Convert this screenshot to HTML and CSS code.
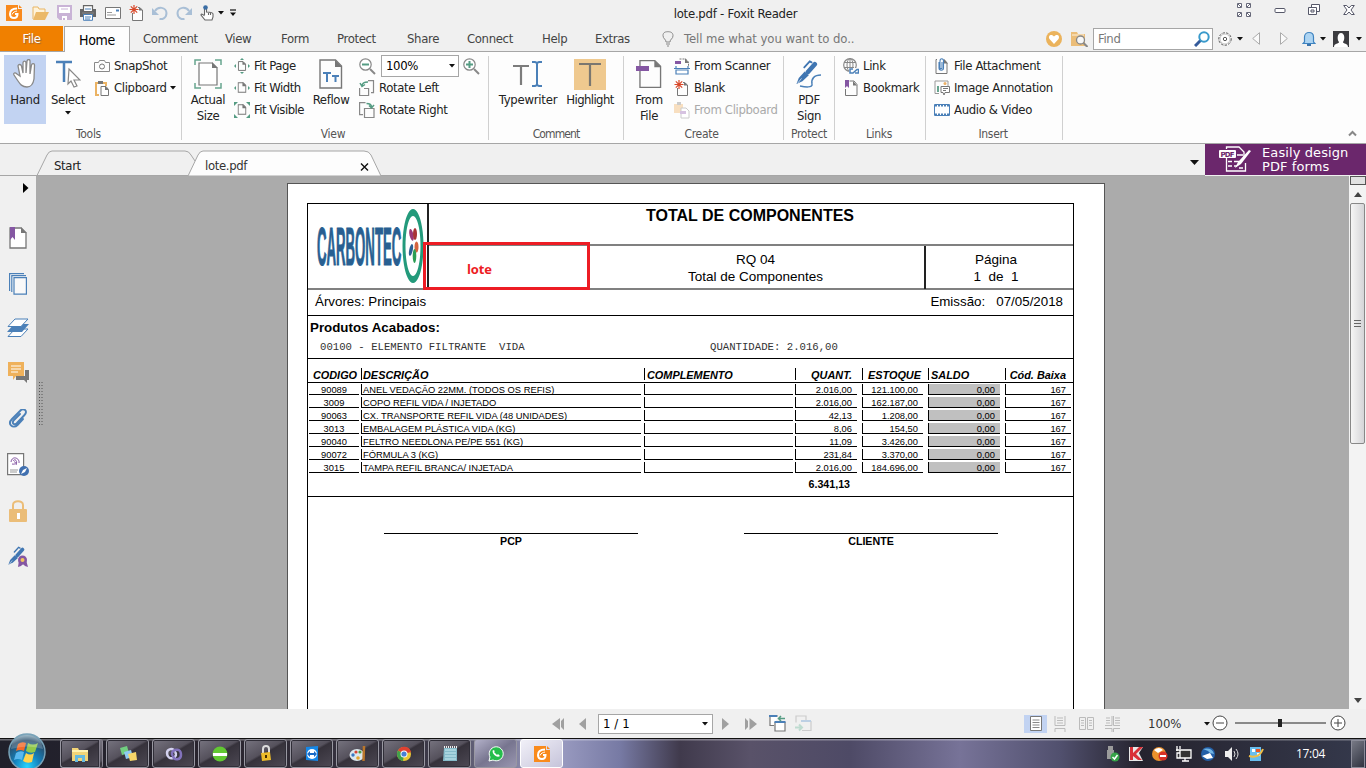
FILE: index.html
```html
<!DOCTYPE html>
<html lang="pt">
<head>
<meta charset="utf-8">
<title>lote.pdf - Foxit Reader</title>
<link rel="stylesheet" href="styles.css">
</head>
<body>
<svg class="defs" width="0" height="0">
  <defs>
    <symbol id="fox" viewBox="0 0 16 16"><path d="M0 0H12V4H16V16H0z" fill="#f98a1c"/><path d="M13 0v3h3z" fill="#f98a1c"/><path d="M11 3.500C6 3.500 4 6 4 9s2 4 4 4 3.500-1.500 3.500-4H9" fill="none" stroke="#fff" stroke-width="2"/><path d="M6 9.500C7 7 9 6.500 11 6" fill="none" stroke="#fff"/></symbol>
    <symbol id="newpage" viewBox="0 0 16 16"><path d="M3.500 8v7.500h10V5l-3-2.500H9" fill="#fdfdfd" stroke="#777"/><path d="M10 2v3.500h4z" fill="#777"/><path d="M5 0v9M.5 4.500h9M1.800 1.300l6.400 6.400M8.200 1.300L1.800 7.700" stroke="#d8482a" stroke-width="1.200"/></symbol>
    <symbol id="page" viewBox="0 0 24 30"><path d="M1 1h15.500l6 6v22H1z" fill="#fdfdfd" stroke="#777" stroke-width="1.400"/><path d="M16 1v7h7z" fill="#777"/></symbol>
    <symbol id="minipage" viewBox="0 0 10 12"><path d="M.7.7h5.600l3 3v7.600H.7z" fill="#fdfdfd" stroke="#777" stroke-width="1.200"/><path d="M5.500 0v4.500H10z" fill="#777"/></symbol>
    <symbol id="down" viewBox="0 0 6 4"><path d="M0 0h6L3 3.500z" fill="#111"/></symbol>
    <symbol id="clip" viewBox="0 0 20 20"><path d="M12 5L6 11c-3 3 .5 6 3 3l7.500-8c4-4-1-8-4.500-4L4 10c-5 5 1 10.500 5.500 6L15 10" fill="none" stroke="#4b80b8" stroke-width="1.900" stroke-linecap="round"/></symbol>
    <symbol id="pen" viewBox="0 0 24 26"><path d="M20.500 4.500L13 13" stroke="#4076b2" stroke-width="5" stroke-linecap="round"/><path d="M9.500 12.500l4.500 4L7 23l-6.500 3L3 19.500z" fill="#4076b2"/><path d="M9 8l6-6.500 2 1" fill="none" stroke="#4076b2" stroke-width="2" stroke-linecap="round"/><path d="M2 25l4-5" stroke="#fff" stroke-width=".7"/></symbol>
  </defs>
</svg>

<header class="titlebar">
  <div class="qat">
    <svg width="16" height="16"><use href="#fox"/></svg>
    <svg class="open" width="17" height="16" viewBox="0 0 17 16"><path d="M1 14V2h5l1 2h6v3" fill="#fff3d9" stroke="#e9b665"/><path d="M4 7h13l-4 8H1z" fill="#ebb969"/></svg>
    <svg width="15" height="16" viewBox="0 0 15 16"><path d="M1 1h13v13H3l-2-2z" fill="#fff" stroke="#c9b3d6" stroke-width="2"/><path d="M1 8h13v7H4l-3-3z" fill="#c9b3d6"/><path d="M4 4h7" stroke="#c9b3d6"/><path d="M5 11h5v4H8v-2H6v2H5z" fill="#fff"/></svg>
    <svg width="17" height="16" viewBox="0 0 17 16"><path d="M3.500 6V.7h9V6" fill="#fff" stroke="#666" stroke-width="1.200"/><path d="M0 4h3v2h10V4h3v8H0z" fill="#666"/><path d="M2 7h12v2H2z" fill="#777"/><path d="M3.500 9.500h9v5.800h-9z" fill="#fff" stroke="#4b80b8"/><path d="M5 12h6M5 14h5M5 4h6" stroke="#4b80b8"/></svg>
    <svg width="16" height="12" viewBox="0 0 16 12"><path d="M.5.5h15v11H.5z" fill="#fff" stroke="#777"/><path d="M11 2.500h3v2h-3z" fill="#4b80b8"/><path d="M2 5.500h5M2 8h9" stroke="#999"/></svg>
    <svg width="16" height="16"><use href="#newpage"/></svg>
    <svg class="undo" width="16" height="15" viewBox="0 0 16 15"><path d="M3 5C6 0 14 1 14.500 7c0 5-4 6.500-7 6" fill="none" stroke="#a9bfd6" stroke-width="2"/><path d="M0 2v7h7z" fill="#a9bfd6"/></svg>
    <svg width="16" height="15" viewBox="0 0 16 15"><path d="M13 5C10 0 2 1 1.500 7c0 5 4 6.500 7 6" fill="none" stroke="#a9bfd6" stroke-width="2"/><path d="M16 2v7H9z" fill="#a9bfd6"/></svg>
    <svg width="14" height="16" viewBox="0 0 14 16"><path d="M4.500 10V3c0-1.500 2-1.500 2 0v4c4 0 6.500.5 6.500 2v3l-1 3H5L1 10c0-1.500 2-1 3.500 1M8.500 8v2M10.500 8v2" fill="#fff" stroke="#666" stroke-width="1.100"/><circle cx="5.500" cy="2.500" r="2.300" fill="#3a6da5"/></svg>
    <svg class="tiny" width="6" height="4"><use href="#down"/></svg>
    <svg class="more" width="6" height="8" viewBox="0 0 6 8"><path d="M0 1h6" stroke="#111" stroke-width="1.200"/><path d="M0 3.500h6L3 7z" fill="#111"/></svg>
  </div>
  <div class="title">lote.pdf - Foxit Reader</div>
  <div class="winbtns">
    <svg width="14" height="14" viewBox="0 0 14 14"><path d="M.5.500h4v4h-4zM9.500.500h4v4h-4zM.5 9.500h4v4h-4zM9.500 9.500h4v4h-4z" fill="#fff" stroke="#666879"/><path d="M1 1l3 3M13 1l-3 3M1 13l3-3M13 13l-3-3" stroke="#666879"/></svg>
    <svg width="12" height="14" viewBox="0 0 12 14"><rect x="1" y="5.500" width="10" height="4" rx="1" fill="#fff" stroke="#555768"/></svg>
    <svg width="12" height="14" viewBox="0 0 12 14"><path d="M3.500 4V1.500h8v7H9" fill="#fff" stroke="#555768"/><path d="M.5 4.500h8v7h-8zM3 7h3v2H3z" fill="#fff" stroke="#555768"/></svg>
    <svg width="12" height="14" viewBox="0 0 12 14"><path d="M.7 2.500h3L6 5l2.300-2.500h3L8 7l3.300 4.500h-3L6 9l-2.300 2.500h-3L4 7z" fill="#fff" stroke="#555768"/></svg>
  </div>
</header>

<nav class="tabs">
  <div class="file">File</div>
  <div class="tab home">Home</div>
  <div class="tab t1">Comment</div><div class="tab t2">View</div><div class="tab t3">Form</div><div class="tab t4">Protect</div><div class="tab t5">Share</div><div class="tab t6">Connect</div><div class="tab t7">Help</div><div class="tab t8">Extras</div>
  <svg class="bulb" width="12" height="16" viewBox="0 0 12 16"><path d="M4 11C4 8 1 8 1 4.500 1 1 4 .7 6 .7s5 .5 5 4C11 8 8 8 8 11zM4 13h4M5 15h2" fill="none" stroke="#888"/></svg>
  <div class="tell">Tell me what you want to do..</div>
  <div class="tools">
    <svg width="16" height="16" viewBox="0 0 16 16"><circle cx="8" cy="8" r="8" fill="#ebb35c"/><path d="M8 13L3.500 8C1.500 4 6 2.500 8 5.500 10 2.500 14.500 4 12.500 8z" fill="#fff"/></svg>
    <svg class="search" width="17" height="16" viewBox="0 0 17 16"><path d="M0 1h6l1 2h7v12H0z" fill="#ebbd78"/><path d="M1 4h12" stroke="#fff3df"/><circle cx="9.500" cy="9" r="4" fill="#f7f7f7" stroke="#888" stroke-width="1.300"/><path d="M12.500 12l4 4" stroke="#888" stroke-width="2"/></svg>
    <div class="find"><span>Find</span><svg width="16" height="16" viewBox="0 0 16 16"><path d="M1 15l6-6" stroke="#345b9b" stroke-width="3"/><circle cx="10" cy="6" r="4.700" fill="#fff" stroke="#3a9acb" stroke-width="2"/></svg></div>
    <svg class="gear" width="14" height="14" viewBox="0 0 14 14"><circle cx="7" cy="7" r="6.200" fill="#fff" stroke="#555" stroke-dasharray="2.500 1.200"/><circle cx="7" cy="7" r="5" fill="#fff" stroke="#888" stroke-width=".5"/><circle cx="7" cy="7" r="1.700" fill="none" stroke="#555"/></svg>
    <svg class="gd" width="6" height="4"><use href="#down"/></svg>
    <svg class="prev" width="8" height="13" viewBox="0 0 8 13"><path d="M7.500.7v11.600L.7 6.500z" fill="#fafafa" stroke="#aaa"/></svg>
    <svg class="next" width="8" height="13" viewBox="0 0 8 13"><path d="M.5.700v11.600l6.800-5.800z" fill="#fafafa" stroke="#aaa"/></svg>
    <svg class="bell" width="14" height="15" viewBox="0 0 14 15"><path d="M2.500 11V6C2.500 0 11.500 0 11.500 6v5l1.500 1.500H1z" fill="#add4f2" stroke="#3e83c0" stroke-width="1.200"/><path d="M5 14h4" stroke="#2666a4" stroke-width="1.800"/></svg>
    <svg class="bd" width="6" height="4"><use href="#down"/></svg>
    <svg class="user" width="16" height="16" viewBox="0 0 16 16"><path d="M0 0h16v16H0z" fill="#3b3b3f"/><path d="M1 16c0-4 5-3 5-5-2-2-2-9 2-9s4 7 2 9c0 2 5 1 5 5z" fill="#fff"/></svg>
    <svg class="ud" width="6" height="4"><use href="#down"/></svg>
  </div>
</nav>

<section class="ribbon">
  <div class="group g-tools">
    <div class="body">
      <div class="big hand"><svg width="26" height="30" viewBox="0 0 26 30"><path d="M8 17L6 7c0-2 3-2 3.500 0L11 14V4c0-2.500 3-2.500 3 0v10l1-12c.5-2 3-2 3 0v13l1.500-9c.5-2 3-1.500 3 0L22 20c-1 6-4 8-7 8-5 0-7-3-9-6l-4-6c-1-2 1-3 3-1z" fill="#fff" stroke="#888" stroke-width="1.300"/></svg><span>Hand</span></div>
      <div class="big select"><svg width="26" height="30" viewBox="0 0 26 30"><path d="M1 3h16M9 3v20" stroke="#4b80b8" stroke-width="2.500"/><path d="M14 10l11 11h-6l3 6-3 1-3-6-3 3z" fill="#fff" stroke="#888" stroke-width="1.200"/></svg><span>Select</span><svg class="drop" width="6" height="4"><use href="#down"/></svg></div>
      <div class="col c-tools">
        <div class="item"><svg width="16" height="12" viewBox="0 0 16 12"><path d="M.5 2.500h4l1-2h5l1 2h4v9H.5z" fill="#fdfdfd" stroke="#888"/><circle cx="8" cy="6.500" r="2.500" fill="none" stroke="#777"/></svg><span>SnapShot</span></div>
        <div class="item"><svg width="16" height="16" viewBox="0 0 16 16"><path d="M5 15H2V3h10v3" fill="none" stroke="#ebb364" stroke-width="2"/><path d="M4 1h5v3H4z" fill="#777"/><path d="M7 6.500h5l2.500 3v6H7z" fill="#fff" stroke="#777"/><path d="M11 6v4h4z" fill="#777"/></svg><span>Clipboard</span><svg class="arr" width="6" height="4"><use href="#down"/></svg></div>
      </div>
    </div>
    <div class="label">Tools</div>
  </div>
  <div class="group g-view">
    <div class="body">
      <div class="big actual"><svg width="28" height="30" viewBox="0 0 28 30"><path d="M1 6V1h6M21 1h6v5M1 24v5h6M21 29h6v-5" fill="none" stroke="#67a58f" stroke-width="1.500"/><path d="M5 4h13l5 5v17H5z" fill="#fff" stroke="#777" stroke-width="1.200"/><path d="M18 3v6h6z" fill="#777"/></svg><span>Actual<br>Size</span></div>
      <div class="col c-fit">
        <div class="item"><svg width="16" height="16" viewBox="0 0 16 16"><use href="#minipage" x="3.500" y="3" width="9" height="10"/><path d="M6 2h4L8 0zM6 14h4l-2 2zM2 6v4L0 8zM14 6v4l2-2z" fill="#559c83"/></svg><span>Fit Page</span></div>
        <div class="item"><svg width="16" height="16" viewBox="0 0 16 16"><use href="#minipage" x="3.500" y="2" width="9" height="11"/><path d="M2 6v4L0 8zM14 6v4l2-2z" fill="#559c83"/></svg><span>Fit Width</span></div>
        <div class="item"><svg width="16" height="16" viewBox="0 0 16 16"><use href="#minipage" x="3.500" y="2" width="9" height="11"/><path d="M0 0h4L0 4zM12 0h4v4zM0 12v4h4zM12 16h4v-4z" fill="#559c83"/></svg><span>Fit Visible</span></div>
      </div>
      <div class="big reflow"><svg width="24" height="30" viewBox="0 0 24 30"><use href="#page" width="24" height="30"/><path d="M4 14h8M8 14v9M13 17h7M16.500 17v6" stroke="#4b80b8" stroke-width="2"/></svg><span>Reflow</span></div>
      <div class="col c-rotate">
        <div class="item zoomrow"><svg width="17" height="17" viewBox="0 0 17 17"><circle cx="6.500" cy="6.500" r="5.700" fill="#fff" stroke="#888" stroke-width="1.200"/><path d="M3 6.500h7" stroke="#559c83" stroke-width="2"/><path d="M11 11l5 5" stroke="#888" stroke-width="2"/></svg><div class="combo"><span>100%</span><svg width="6" height="4"><use href="#down"/></svg></div><svg width="17" height="17" viewBox="0 0 17 17"><circle cx="6.500" cy="6.500" r="5.700" fill="#fff" stroke="#888" stroke-width="1.200"/><path d="M3 6.500h7M6.500 3v7" stroke="#559c83" stroke-width="2"/><path d="M11 11l5 5" stroke="#888" stroke-width="2"/></svg></div>
        <div class="item"><svg width="16" height="16" viewBox="0 0 16 16"><path d="M9 .600h5.500v12H12M.6 8v7.500h9v-7H5" fill="none" stroke="#888" stroke-width="1.200"/><path d="M3 6c0-3 2-4 6-4M1 3l2 3.500 3-2" fill="none" stroke="#559c83" stroke-width="1.500"/></svg><span>Rotate Left</span></div>
        <div class="item"><svg width="16" height="16" viewBox="0 0 16 16"><path d="M6.500.600H.6v12H4M5.500 6.500h9.500v9H5.500z" fill="none" stroke="#888" stroke-width="1.200"/><path d="M12.500 5c0-3-2-3.500-5-3.500M10 3.500l2.500 2.500 2.500-3" fill="none" stroke="#559c83" stroke-width="1.500"/></svg><span>Rotate Right</span></div>
      </div>
    </div>
    <div class="label">View</div>
  </div>
  <div class="group g-comment">
    <div class="body">
      <div class="big typew"><svg width="30" height="32" viewBox="0 0 30 32"><path d="M0 8h16M8 8v19" stroke="#7c7c7c" stroke-width="2.200"/><path d="M19 4h3l2 1 2-1h3M19 28h3l2-1 2 1h3M24 5v22" fill="none" stroke="#4b80b8" stroke-width="2"/></svg><span>Typewriter</span></div>
      <div class="big hl"><svg width="32" height="31" viewBox="0 0 32 31"><path d="M0 0h32v31H0z" fill="#efc98f"/><path d="M5 5h22M16 5v22" stroke="#7b7770" stroke-width="2.200"/></svg><span>Highlight</span></div>
    </div>
    <div class="label tight">Comment</div>
  </div>
  <div class="group g-create">
    <div class="body">
      <div class="big fromfile"><svg width="26" height="30" viewBox="0 0 26 30"><use href="#page" x="3" width="23" height="30"/><path d="M0 7h13v5H0z" fill="#8557a3"/></svg><span>From<br>File</span></div>
      <div class="col c-create">
        <div class="item"><svg width="16" height="17" viewBox="0 0 16 17"><path d="M5.500 1h6l3 3v4" fill="none" stroke="#777" stroke-dasharray="2 1"/><path d="M11 0v5h4z" fill="#777"/><path d="M1 3h6v3H1z" fill="#8557a3"/><path d="M2 8v2M14 8v2M2 16v-4h12v4z" fill="#fff" stroke="#4b80b8" stroke-width="1.200"/><path d="M0 10.500h16" stroke="#4b80b8"/></svg><span>From Scanner</span></div>
        <div class="item"><svg width="16" height="16"><use href="#newpage"/></svg><span>Blank</span></div>
        <div class="item off"><svg width="16" height="17" viewBox="0 0 16 17"><path d="M0 2h9v9H0z" fill="#f8dfc0"/><path d="M3 0h4v3H3z" fill="#ccc"/><path d="M7 6h5l3 3v7H7z" fill="#fff" stroke="#ccc"/><path d="M6 9h6v3H6z" fill="#d6c2e1"/></svg><span>From Clipboard</span></div>
      </div>
    </div>
    <div class="label">Create</div>
  </div>
  <div class="group g-protect">
    <div class="body"><div class="big sign"><svg width="26" height="30" viewBox="0 0 26 30"><use href="#pen" x="0" y="0" width="22" height="26"/><path d="M4 27c5 1 13 2 12-2-1-5 2-9 9-9" fill="none" stroke="#4b80b8" stroke-width="1.500"/></svg><span>PDF<br>Sign</span></div></div>
    <div class="label">Protect</div>
  </div>
  <div class="group g-links">
    <div class="body"><div class="col c-links">
      <div class="item"><svg width="16" height="16" viewBox="0 0 16 16"><circle cx="7" cy="7" r="6.300" fill="none" stroke="#888" stroke-width="1.200"/><ellipse cx="7" cy="7" rx="3" ry="6.300" fill="none" stroke="#888"/><path d="M1 4.500h12M1 9.500h10M7 1v12" stroke="#888"/><path d="M6 10h10v6H6z" fill="#fdfdfd"/><path d="M10 11H7v4h3l4-3.500h1.500V15H12" fill="none" stroke="#4b80b8" stroke-width="1.500"/></svg><span>Link</span></div>
      <div class="item"><svg width="16" height="16" viewBox="0 0 16 16"><path d="M6.500 1H11l3 3.500v11H2.500V9" fill="none" stroke="#777"/><path d="M10 1v4.500h4z" fill="#777"/><path d="M2 0h4v8L4 6 2 8z" fill="#8557a3"/></svg><span>Bookmark</span></div>
    </div></div>
    <div class="label">Links</div>
  </div>
  <div class="group g-insert">
    <div class="body"><div class="col c-insert">
      <div class="item"><svg width="16" height="16" viewBox="0 0 16 16"><path d="M3 1.500H2v14h11V5l-3-3.500" fill="none" stroke="#777"/><path d="M10 1v4.500h4z" fill="#777"/><path d="M5 4v6c0 3 4.500 3 4.500 0V3c0-3-3.500-3-3.500 0v7c0 1 2 1 2 0V4" fill="none" stroke="#4b80b8" stroke-width="1.100"/></svg><span>File Attachment</span></div>
      <div class="item"><svg width="16" height="16" viewBox="0 0 16 16"><path d="M5 13.500H1V1h13v5" fill="none" stroke="#999"/><circle cx="11" cy="3.500" r="1.500" fill="#ebaf65"/><path d="M3 6h2v6H3z" fill="#67a58f"/><path d="M7 6.500h8.500v6H11L10 15l-1-2.500H7z" fill="#fff" stroke="#777"/><path d="M9 8.500h5M9 10.500h3" stroke="#777"/></svg><span>Image Annotation</span></div>
      <div class="item"><svg width="16" height="12" viewBox="0 0 16 12"><path d="M.5.500h15v11H.5z" fill="#fff" stroke="#4b80b8"/><path d="M1 1.500h14M1 10.500h14" stroke="#4b80b8" stroke-width="2" stroke-dasharray="2 1"/></svg><span>Audio &amp; Video</span></div>
    </div></div>
    <div class="label">Insert</div>
  </div>
  <svg class="collapse" width="9" height="7" viewBox="0 0 9 7"><path d="M1 5.500L4.500 2 8 5.500" fill="none" stroke="#888" stroke-width="2"/></svg>
</section>

<div class="doctabs">
  <svg class="tabshape" width="1205" height="32" viewBox="0 0 1205 32"><path d="M37 31.500L47 11q2-4 5-4H185q4 0 6 4l4 6" fill="none" stroke="#a6a6a6"/><path d="M188 32L198 11q2-4 5-4H364q5 0 7 4l10 21z" fill="#fdfdfd" stroke="#a6a6a6"/><path d="M0 31.500H188M381 31.500H1205" stroke="#a6a6a6"/></svg>
  <div class="names"><span class="start">Start</span><span class="doc">lote.pdf</span><svg class="close" width="9" height="8" viewBox="0 0 9 8"><path d="M1 .5l7 7M8 .5l-7 7" stroke="#111" stroke-width="1.400"/></svg><svg class="list" width="9" height="5" viewBox="0 0 9 5"><path d="M0 0h9L4.500 5z" fill="#111"/></svg></div>
  <div class="promo"><svg width="32" height="27" viewBox="0 0 32 27"><path d="M7.500 3V1H20l5 5v6M7.500 12v13h19V17" fill="none" stroke="#fff" stroke-width="1.300"/><rect x="0" y="4" width="17" height="8" rx="1" fill="#fff"/><text x="1.500" y="11" class="pdf" textLength="14">PDF</text><path d="M18 9h6M9 15.500h4M15 15.500h5M9 20h4M15 20h3M20 22h4" stroke="#fff" stroke-width="1.600"/><path d="M30 4L19 16l-3 6 6-4L32 5z" fill="#fff"/></svg><div>Easily design<br>PDF forms</div></div>
</div>

<main>
  <aside>
    <svg class="s0" width="6" height="10" viewBox="0 0 6 10"><path d="M0 0l5.500 5L0 10z" fill="#000"/></svg>
    <svg width="18" height="22" viewBox="0 0 18 22"><path d="M1 1h11l5 5v15H1z" fill="#fff" stroke="#777" stroke-width="1.300"/><path d="M12 0v6h6z" fill="#777"/><path d="M1 0h5v13l-2.500-3L1 13z" fill="#8557a3"/></svg>
    <svg width="18" height="22" viewBox="0 0 18 22"><path d="M.6 18V.700H15M2.800 19V2.700H17M5 4.700h12.400v16.500H5z" fill="#f9f9f9" stroke="#4b80b8" stroke-width="1.200"/></svg>
    <svg width="22" height="20" viewBox="0 0 22 20"><path d="M1 18.500h13L21 11H8z" fill="#fff" stroke="#4b80b8"/><path d="M0 14h15l7-8H7z" fill="#4b80b8"/><path d="M1 8.500h13L21 1H8z" fill="#fff" stroke="#4b80b8"/></svg>
    <svg width="21" height="22" viewBox="0 0 21 22"><path d="M17 8h4v10h-2v3l-3-3H8v-4h9z" fill="#777"/><path d="M0 0h16v14H8l-3 4v-4H0z" fill="#efb15b"/><path d="M3 4h10M3 7h10M3 10h7" stroke="#fff"/></svg>
    <svg width="20" height="22" viewBox="0 0 20 20"><use href="#clip" width="20" height="20"/></svg>
    <svg class="cert" width="22" height="24" viewBox="0 0 22 24"><path d="M.6.600h16v21H.6z" fill="#fff" stroke="#777" stroke-width="1.200"/><path d="M4 9c1-7 9-4 8 1M6 8c2-3 5 0 3 4M5 11c5 1 4-3 2-2" fill="none" stroke="#8557a3"/><path d="M3 17h8M3 19h7" stroke="#999"/><circle cx="17" cy="18" r="5" fill="#4070b0"/><path d="M14 21l2-4 4-2-2 4z" fill="#fff"/></svg>
    <svg width="18" height="22" viewBox="0 0 18 22"><path d="M4 10V5c0-5 10-5 10 0v5" fill="none" stroke="#ebbd78" stroke-width="2"/><rect y="9" width="18" height="13" rx="1" fill="#ebbd78"/><path d="M8 13h3v6H8z" fill="#fff"/></svg>
    <svg width="22" height="22" viewBox="0 0 22 22"><use href="#pen" x="1" width="17" height="21"/><path d="M12 15l-1 7 3-1 2-2 2 2 3 1-2-7z" fill="#8557a3"/><circle cx="15.500" cy="15" r="4.500" fill="#8557a3"/><circle cx="15.500" cy="15" r="2" fill="#f4c65f"/></svg>
  </aside>
  <div class="viewer">
    <svg class="grip" width="4" height="45" viewBox="0 0 4 45"><path d="M.5 0v45M3 0v45" stroke="#555" stroke-dasharray="1 2"/></svg>
    <article class="sheet">
      <div class="report">
        <div class="head">
          <svg class="brand" width="119" height="85" viewBox="0 0 119 85"><text class="brandtext" transform="translate(9 61) scale(.245 1)" textLength="344" lengthAdjust="spacingAndGlyphs">CARBONTEC</text><path fill-rule="evenodd" d="M105 5a10.500 37 0 1 0 .01 0zM105 12a7.500 30 0 1 1-.01 0z" fill="#239a7b"/><ellipse cx="103.500" cy="31" rx="2" ry="6" fill="#9a3677" transform="rotate(-12 103 31)"/><ellipse cx="107" cy="30" rx="2" ry="6" fill="#a83235"/><ellipse cx="108.500" cy="43" rx="2" ry="5.500" fill="#d56440"/><ellipse cx="103" cy="46" rx="1.800" ry="6" fill="#2c6094" transform="rotate(12 103 46)"/><ellipse cx="106.500" cy="52" rx="1.800" ry="7" fill="#2a9d53"/></svg>
          <div class="headmain">
            <div class="htitle">TOTAL DE COMPONENTES</div>
            <div class="hrow"><div class="hempty"></div><div class="hrq">RQ 04<br>Total de Componentes</div><div class="hpag">Página<br>1&nbsp; de&nbsp; 1</div></div>
          </div>
          <div class="redbox">lote</div>
        </div>
        <div class="meta"><span class="trees">Árvores: Principais</span><span class="date">Emissão:&nbsp;&nbsp; 07/05/2018</span></div>
        <div class="prod"><b>Produtos Acabados:</b><div class="mono"><span>00100 - ELEMENTO FILTRANTE&nbsp; VIDA</span><span>QUANTIDADE: 2.016,00</span></div></div>
        <div class="table">
          <div class="tr th"><div>CODIGO</div><div>DESCRIÇÃO</div><div>COMPLEMENTO</div><div>QUANT.</div><div>ESTOQUE</div><div>SALDO</div><div>Cód. Baixa</div></div>
          <div class="tr"><div>90089</div><div>ANEL VEDAÇÃO 22MM. (TODOS OS REFIS)</div><div></div><div>2.016,00</div><div>121.100,00</div><div>0,00</div><div>167</div></div>
          <div class="tr"><div>3009</div><div>COPO REFIL VIDA / INJETADO</div><div></div><div>2.016,00</div><div>162.187,00</div><div>0,00</div><div>167</div></div>
          <div class="tr"><div>90063</div><div>CX. TRANSPORTE REFIL VIDA (48 UNIDADES)</div><div></div><div>42,13</div><div>1.208,00</div><div>0,00</div><div>167</div></div>
          <div class="tr"><div>3013</div><div>EMBALAGEM PLÁSTICA VIDA (KG)</div><div></div><div>8,06</div><div>154,50</div><div>0,00</div><div>167</div></div>
          <div class="tr"><div>90040</div><div>FELTRO NEEDLONA PE/PE 551 (KG)</div><div></div><div>11,09</div><div>3.426,00</div><div>0,00</div><div>167</div></div>
          <div class="tr"><div>90072</div><div>FÓRMULA 3 (KG)</div><div></div><div>231,84</div><div>3.370,00</div><div>0,00</div><div>167</div></div>
          <div class="tr"><div>3015</div><div>TAMPA REFIL BRANCA/ INJETADA</div><div></div><div>2.016,00</div><div>184.696,00</div><div>0,00</div><div>167</div></div>
          <div class="total">6.341,13</div>
        </div>
        <div class="signs"><div>PCP</div><div>CLIENTE</div></div>
      </div>
    </article>
  </div>
  <div class="scroll"><div class="split"></div><svg class="up" width="8" height="5" viewBox="0 0 8 5"><path d="M0 5h8L4 0z" fill="#444"/></svg><div class="thumb"><i></i></div><svg class="dn" width="8" height="5" viewBox="0 0 8 5"><path d="M0 0h8L4 5z" fill="#444"/></svg></div>
</main>

<footer class="status">
  <svg class="first" width="13" height="12" viewBox="0 0 13 12"><path d="M8 0v12L0 6zM12 0v12L9 9V3z" fill="#a0a0a0"/></svg>
  <svg class="pv" width="7" height="12" viewBox="0 0 7 12"><path d="M7 0v12L0 6z" fill="#a0a0a0"/></svg>
  <div class="pagebox"><span>1 / 1</span><svg width="6" height="4"><use href="#down"/></svg></div>
  <svg class="nx" width="7" height="12" viewBox="0 0 7 12"><path d="M0 0v12l7-6z" fill="#a0a0a0"/></svg>
  <svg class="last" width="12" height="12" viewBox="0 0 12 12"><path d="M0 0v12l3-3V3zM4.500 0v12L12 6z" fill="#a0a0a0"/></svg>
  <svg class="v1" width="17" height="17" viewBox="0 0 17 17"><path d="M5 10.500H1V1h8M6 7.500h10v8.500H6z" fill="#fff" stroke="#777" stroke-width="1.200"/><path d="M0 1h8M5.500 7h11" stroke="#4b80b8" stroke-width="2"/><path d="M16 3.500H9.500m2.500-2.500l-2.500 2.500 2.500 2.500" fill="none" stroke="#559c83" stroke-width="1.500"/></svg>
  <svg class="v2" width="17" height="17" viewBox="0 0 17 17"><path d="M1 7.500V1h10v4M7 6.500h9v9H7" fill="none" stroke="#ccc" stroke-width="1.200"/><path d="M6 6h10" stroke="#bdd0e4" stroke-width="2"/><path d="M0 12.500h7m-3-3l3 3-3 3" fill="none" stroke="#bedbd0" stroke-width="2"/></svg>
  <div class="mode"><svg width="12" height="15" viewBox="0 0 12 15"><path d="M.5.500h11v14H.5z" fill="#fff" stroke="#777"/><path d="M2.500 4h7M2.500 6.500h7M2.500 9h7M2.500 11.500h7" stroke="#888"/></svg></div>
  <svg class="m2" width="12" height="16" viewBox="0 0 12 16"><path d="M1 0v9.500h10V0M1 16v-3.500h10V16M3 2h6M3 4.500h6M3 7h6" fill="none" stroke="#bbb"/></svg>
  <svg class="m3" width="15" height="14" viewBox="0 0 15 14"><path d="M.5.500h6v12h-6zM8.500.500h6v12h-6zM2 3.500h3M2 6h3M2 8.500h3M10 3.500h3M10 6h3M10 8.500h3" fill="none" stroke="#bbb"/></svg>
  <svg class="m4" width="16" height="16" viewBox="0 0 16 16"><path d="M0 9.500h7V0M15 9.500H8.500V0M0 12.500h7V16M15 12.500H8.500V16M1 2h4M1 4.500h4M1 7h4M10 2h5M10 4.500h5M10 7h5" fill="none" stroke="#bbb"/></svg>
  <span class="pct">100%</span><svg class="pd" width="6" height="4"><use href="#down"/></svg>
  <svg class="slider" width="134" height="16" viewBox="0 0 134 16"><circle cx="8" cy="8" r="7" fill="#fff" stroke="#444"/><path d="M4 8h8" stroke="#444"/><path d="M23 8h91" stroke="#222" stroke-width="1.200"/><path d="M66 4h4v8h-4z" fill="#222"/><circle cx="126" cy="8" r="7" fill="#fff" stroke="#444"/><path d="M122 8h8M126 4v8" stroke="#444"/></svg>
</footer>

<div class="taskbar">
  <svg class="orb" width="38" height="38" viewBox="0 0 38 38"><defs><radialGradient id="og" cx=".5" cy=".9" r=".9"><stop offset="0" stop-color="#25d5ff"/><stop offset=".4" stop-color="#1480bb"/><stop offset=".8" stop-color="#294c69"/><stop offset="1" stop-color="#9abccc"/></radialGradient></defs><circle cx="19" cy="19" r="18" fill="url(#og)" stroke="#78a2b8" stroke-width="1.500"/><path d="M10 11q4-3 8-1l-2 8q-4-2-8 0z" fill="#f16b2a"/><path d="M20 10q5 3 10 0l-3 9q-5 2-9-1z" fill="#91c84b"/><path d="M8 20q4-3 8-1l-2 8q-4-2-8 0z" fill="#59b8ef"/><path d="M18 20q4 3 8 0l-2 9q-5 2-9-1z" fill="#ffd34d"/><path d="M3 16Q4 3 19 2q14 1 16 14-15-5-32 0" fill="#fff" opacity=".2"/></svg>
  <div class="apps">
    <div class="app stack"><svg width="20" height="20" viewBox="0 0 20 20"><path d="M2 4h6l1 2h9v11H2z" fill="#f2d477"/><path d="M2 7h16" stroke="#fff2b0" stroke-width="2"/><path d="M5 18v-7h10v7h-3v-4H8v4z" fill="#65b9df"/></svg></div>
    <div class="app"><svg width="20" height="20" viewBox="0 0 20 20"><path d="M2 4l7-2 2 7-7 2z" fill="#71ce80"/><path d="M6 8l7-2 2 7-7 2z" fill="#8ec9f1"/><path d="M10 10l8-2 1 8-7 1z" fill="#f5d569"/></svg></div>
    <div class="app"><svg width="20" height="20" viewBox="0 0 20 20"><path d="M11 8C9 3 3 5 3 9s3 6 6 5 4-4 2-6" fill="none" stroke="#d4d2ef" stroke-width="2.500"/><path d="M9 12c1 5 8 4 8-1s-3-6-6-5-4 4-2 6" fill="none" stroke="#8272bb" stroke-width="2.500"/></svg></div>
    <div class="app"><svg width="20" height="20" viewBox="0 0 20 20"><circle cx="10" cy="10" r="7.500" fill="#62c832"/><path d="M3 9h14v3H3z" fill="#fff"/></svg></div>
    <div class="app"><svg width="20" height="20" viewBox="0 0 20 20"><path d="M7 9V5c0-4 6-4 6 0v4" fill="none" stroke="#ddd" stroke-width="2"/><path d="M5 9l9-1 1 8-9 1z" fill="#eebd2a"/><path d="M10 11v3" stroke="#493000" stroke-width="2"/></svg></div>
    <div class="app"><svg width="20" height="20" viewBox="0 0 20 20"><path d="M4 3l12-1v15L4 16z" fill="#1687e7"/><circle cx="10" cy="10" r="5" fill="#fff"/><path d="M5 10l3-3v2h4V7l3 3-3 3v-2H8v2z" fill="#1769c6"/></svg></div>
    <div class="app"><svg width="20" height="20" viewBox="0 0 20 20"><ellipse cx="9" cy="11" rx="7.500" ry="6" fill="#dce8ed"/><circle cx="5" cy="11" r="1.700" fill="#3878c2"/><circle cx="8" cy="8" r="1.600" fill="#d64433"/><circle cx="12" cy="8" r="1.600" fill="#4d9b43"/><circle cx="10" cy="14" r="1.800" fill="#e6a52d"/><path d="M16 2l-.5 15" stroke="#b9762b" stroke-width="2.500"/></svg></div>
    <div class="app"><svg width="20" height="20" viewBox="0 0 20 20"><circle cx="10" cy="10" r="7" fill="#eac735"/><path d="M10 10L4 6.500A7 7 0 0 1 17 8z" fill="#df4131"/><path d="M10 10L4 6.500A7 7 0 0 0 9 17z" fill="#41a14c"/><circle cx="10" cy="10" r="3.500" fill="#fff"/><circle cx="10" cy="10" r="2.600" fill="#4880d6"/></svg></div>
    <div class="app"><svg width="20" height="20" viewBox="0 0 20 20"><path d="M4 4h13v13H3z" fill="#86bbc9"/><path d="M5 6h11M5 9h11M5 12h11M5 15h11" stroke="#c9ebf1"/><path d="M4 3h13" stroke="#eee" stroke-width="2" stroke-dasharray="1 1"/></svg></div>
    <div class="app light"><svg width="20" height="20" viewBox="0 0 20 20"><path d="M3 17l1-4a7 7 0 1 1 3 3z" fill="#24bd4b" stroke="#fff"/><path d="M7 6c-2 3 4 9 7 6l-2-2-1 1-3-3 1-1z" fill="#fff"/></svg></div>
    <div class="app active"><svg width="16" height="16"><use href="#fox"/></svg></div>
  </div>
  <div class="tray">
    <svg width="18" height="18" viewBox="0 0 18 18"><path d="M5 1h5v4H5zM4 5h7v9H4z" fill="#9b9b9b"/><circle cx="12" cy="12" r="4.500" fill="#36a348"/><path d="M9.500 12l2 2 3-4" fill="none" stroke="#fff" stroke-width="1.500"/></svg>
    <svg width="18" height="18" viewBox="0 0 18 18"><path d="M2 2h14l-4 6 4 8H2z" fill="#e8e8e8"/><path d="M3 2h3v6l6-6h4l-7 7 6 6h-4l-5-4v4H3z" fill="#d93037"/></svg>
    <svg width="18" height="18" viewBox="0 0 18 18"><circle cx="8" cy="9" r="7" fill="#eb912c"/><path d="M3 5q5-4 9 0l-5 3z" fill="#fff"/><circle cx="12" cy="11" r="4.500" fill="#d83126"/><path d="M9 11h6" stroke="#fff" stroke-width="2"/></svg>
    <svg width="18" height="18" viewBox="0 0 18 18"><path d="M5 5h11v8H5zM7 16h7M10 13v3M2 1v5M5 1v3M1 5h4v3H2v5h3" fill="#333" stroke="#fff" stroke-width="1.300"/></svg>
    <svg width="18" height="18" viewBox="0 0 18 18"><circle cx="9" cy="9" r="7" fill="#235fa7"/><path d="M4 4q9-2 11 5l-4-1-2-2z" fill="#72b5e4"/><path d="M3 11l8-3 3 5-6 1z" fill="#fff"/></svg>
    <svg width="18" height="18" viewBox="0 0 18 18"><path d="M2 6h3l4-4v14l-4-4H2z" fill="#eee"/><path d="M11 6q2 3 0 6M13 4q4 5 0 10" fill="none" stroke="#ddd"/></svg>
    <svg width="18" height="18" viewBox="0 0 18 18"><path d="M3 2h11v14H3z" fill="#68bded"/><path d="M5 4h3v3H5zM10 8h3v3h-3z" fill="#fff"/><path d="M9 4h4v3H9z" fill="#e75627"/><path d="M2 11Q12 14 16 4" fill="none" stroke="#f1bd45" stroke-width="2"/></svg>
  </div>
  <div class="clock">17:04</div>
  <div class="desk"></div>
</div>
</body>
</html>
```

FILE: styles.css
```css
* { box-sizing: border-box; }
body { margin: 0; width: 1366px; height: 768px; overflow: hidden; display: flex; flex-direction: column; background: #f0f0f0; color: #222; font: 13px/16px "DejaVu Sans Condensed", "DejaVu Sans", sans-serif; letter-spacing: -.35px; white-space: nowrap; }
svg { display: block; flex: none; }
.defs { position: absolute; }

.titlebar { height: 26px; flex: none; display: flex; align-items: center; }
.qat { width: 440px; display: flex; align-items: center; padding-left: 6px; gap: 8px; }
.qat .open { margin-left: 2px; }
.qat .undo { margin-left: -1px; }
.qat .tiny { margin-left: -4px; }
.qat .more { margin-left: -2px; }
.title { width: 591px; text-align: center; letter-spacing: -.25px; padding-top: 1px; }
.winbtns { display: flex; margin-left: 206px; width: 129px; gap: 22.500px; margin-top: -6px; }

.tabs { height: 26px; flex: none; display: flex; align-items: center; border-bottom: 1px solid #a6a6a6; color: #444; }
.file { width: 63px; height: 25px; padding-top: 5px; background: #f08000; color: #fff; text-align: center; text-shadow: 1px 1px 1px #963; }
.tab.home { width: 66px; height: 26px; margin: 0 15px 0 1px; align-self: flex-start; padding-top: 5px; text-align: center; font-size: 14px; color: #000; background: #fdfdfd; border: 1px solid #a6a6a6; border-bottom: 0; }
.tab { padding-top: 1px; }
.t1 { width: 82px; margin-left: -2px; }
.t2 { width: 56px; }
.t3 { width: 56px; }
.t4 { width: 70px; }
.t5 { width: 60px; }
.t6 { width: 75px; }
.t7 { width: 53px; }
.t8 { width: 67px; }
.tell { width: 372px; padding-left: 10px; padding-top: 1px; color: #777; letter-spacing: -.05px; }
.tools { display: flex; align-items: center; }
.search { margin-left: 9px; }
.find { margin-left: 5px; width: 120px; height: 22px; display: flex; align-items: center; justify-content: space-between; padding: 0 2px 0 4px; background: #fff; border: 1px solid #a6a6a6; color: #777; }
.gear { margin-left: 5px; }
.gd { margin-left: 5px; }
.prev { margin-left: 9px; }
.next { margin-left: 20px; }
.bell { margin-left: 14px; }
.bd { margin-left: 4px; }
.user { margin-left: 7px; }
.ud { margin-left: 7px; }

.ribbon { height: 92px; flex: none; display: flex; background: #fdfdfd; border-bottom: 1px solid #a6a6a6; padding-top: 3px; }
.group { height: 84px; border-right: 1px solid #d0d0d0; display: flex; flex-direction: column; margin-top: 1px; }
.group .body { height: 70px; display: flex; margin-top: -1px; flex: none; }
.label { text-align: center; color: #555; font-size: 12px; letter-spacing: -.3px; padding-top: 1px; }
.label.tight { letter-spacing: -.9px; }
.g-tools { width: 182px; }
.g-tools .label { padding-right: 4px; }
.g-view { width: 307px; }
.g-view .label { padding-right: 4px; }
.g-comment { width: 135px; }
.g-create { width: 160px; }
.g-create .label { padding-right: 4px; }
.g-protect { width: 51px; }
.g-links { width: 91px; }
.g-links .label, .g-insert .label { padding-right: 2px; }
.g-insert { width: 137px; }
.big { display: flex; flex-direction: column; align-items: center; text-align: center; height: 69px; padding-top: 4px; flex: none; }
.big span { margin-top: 3px; }
.hand { width: 42px; margin-left: 4px; background: #c2d3f2; }
.select { width: 44px; }
.drop { margin-top: 3px; }
.col { display: flex; flex-direction: column; flex: none; }
.item { height: 22px; display: flex; align-items: center; }
.item span { margin-left: 4px; }
.item .arr { margin-left: 3px; }
.c-tools { margin-left: 4px; }
.actual { width: 42px; margin-left: 5px; }
.c-fit { margin-left: 5px; width: 77px; }
.c-fit .item { letter-spacing: -.5px; }
.reflow { width: 40px; }
.c-rotate { margin-left: 8px; }
.combo { width: 78px; height: 22px; margin: 0 4px 0 5px; background: #fff; border: 1px solid #a6a6a6; color: #000; display: flex; align-items: center; justify-content: space-between; padding-right: 3px; }
.typew { width: 60px; margin-left: 9px; padding-top: 3px; }
.typew span { margin-top: 2px; letter-spacing: -.25px; }
.hl { width: 60px; margin-left: 2px; }
.hl span { margin-top: 2px; letter-spacing: -.6px; }
.fromfile { width: 40px; margin-left: 5px; }
.c-create { margin-left: 5px; }
.off { color: #aaa; }
.sign { width: 50px; }
.c-links { margin-left: 8px; }
.c-insert { margin-left: 8px; }
.collapse { margin: 75px 0 0 285px; }

.doctabs { height: 32px; flex: none; display: flex; }
.tabshape { margin-right: -1205px; }
.names { width: 1205px; display: flex; align-items: center; padding: 11px 0 0 54px; z-index: 1; }
.start { width: 151px; }
.doc { width: 155px; color: #333; }
.close { margin-top: 2px; }
.list { margin: -7px 0 0 821px; }
.promo { width: 161px; display: flex; align-items: center; background: #6b276c; color: #fff; padding-left: 14px; gap: 11px; font-size: 13px; line-height: 14px; letter-spacing: .1px; font-family: "DejaVu Sans", sans-serif; height: 31px; }
.pdf { font: bold 7px "DejaVu Sans", sans-serif; fill: #6b276c; letter-spacing: 0; }

main { height: 533px; flex: none; display: flex; }
aside { width: 36px; display: flex; flex-direction: column; align-items: center; gap: 23.800px; padding-top: 7px; }
aside .s0 { margin: 0 0 10px 15px; }
aside .cert { margin: -1px 0; }
.viewer { width: 1313px; background: #ababab; display: flex; align-items: flex-start; }
.grip { margin: 206px 0 0 3px; }
.sheet { margin: 7px 0 0 244px; width: 818px; height: 526px; background: #fff; border: 1px solid #555; border-bottom: 0; padding: 19px 0 0 19px; color: #000; font-family: "Liberation Sans", Arial, sans-serif; letter-spacing: 0; overflow: hidden; }
.report { width: 767px; height: 506px; border: 1px solid #000; border-bottom: 0; }
.head { position: relative; height: 86px; display: flex; border-bottom: 2px solid #808080; }
.brandtext { font: bold 54px "Liberation Sans", sans-serif; fill: #285f91; stroke: #285f91; stroke-width: 1.200px; }
.headmain { flex: 1; border-left: 2px solid #222; }
.htitle { height: 42px; padding: 4px 2px 0 0; border-bottom: 2px solid #808080; text-align: center; font-weight: bold; font-size: 16px; line-height: 16px; }
.hrow { display: flex; height: 43px; font-size: 13.500px; line-height: 17px; text-align: center; }
.hempty { width: 158px; }
.hrq { width: 339px; padding-top: 5px; border-right: 2px solid #222; }
.hpag { flex: 1; padding: 5px 7px 0 0; }
.redbox { position: absolute; left: 115px; top: 38px; width: 167px; height: 48px; border: 3px solid #ed1c24; color: #ed1c24; padding: 16px 0 0 41px; font: bold 13px/16px "Open Sans", sans-serif; letter-spacing: -.1px; }
.meta { height: 26px; border-bottom: 1px solid #000; display: flex; justify-content: space-between; padding: 4px 10px 0 7px; font-size: 13.330px; }
.prod { height: 43px; border-bottom: 1px solid #000; padding: 4px 0 0 2px; font-size: 13.330px; }
.mono { display: flex; padding: 4px 0 0 10px; font: 10.670px/14px "Liberation Mono", monospace; color: #333; }
.mono span { width: 390px; flex: none; }
.table { height: 138px; border-bottom: 1px solid #000; padding: 9px 1px 0; font-size: 9.330px; }
.tr { display: flex; height: 13px; padding-top: 1px; line-height: 10px; }
.tr > div { height: 11px; border-left: 1px solid #000; border-bottom: 1px solid #000; padding-top: 1px; flex: none; }
.tr > div:nth-child(1) { width: 50px; border-left: 0; text-align: center; }
.tr > div:nth-child(2) { width: 280px; margin-left: 2px; padding-left: 1px; }
.tr > div:nth-child(3) { width: 149px; margin-left: 3px; padding-left: 2px; }
.tr > div:nth-child(4) { width: 62px; margin-left: 2px; text-align: right; padding-right: 5px; }
.tr > div:nth-child(5) { width: 61px; margin-left: 5px; text-align: right; padding-right: 5px; }
.tr > div:nth-child(6) { width: 72px; margin-left: 5px; text-align: right; padding-right: 5px; background: #c0c0c0; }
.tr > div:nth-child(7) { width: 66px; margin-left: 5px; text-align: right; padding-right: 5px; }
.tr.th { height: 15px; margin: 0 -1px; padding: 0 1px; border-bottom: 1px solid #000; font: italic bold 10.900px/14px "Liberation Sans", sans-serif; }
.tr.th > div { border-bottom: 0; height: 12px; padding-top: 0; }
.tr.th > div:nth-child(1) { padding-left: 2px; }
.tr.th > div:nth-child(5) { padding-right: 2px; }
.tr.th > div:nth-child(6) { background: none; text-align: left; padding-left: 2px; }
.total { font-weight: bold; font-size: 10.670px; width: 541px; text-align: right; padding-top: 2px; }
.signs { display: flex; gap: 106px; padding: 36px 0 0 76px; font: bold 10.670px/15px "Liberation Sans", sans-serif; }
.signs div { width: 254px; border-top: 1px solid #000; text-align: center; }

.scroll { width: 17px; background: #f3f3f3; display: flex; flex-direction: column; align-items: center; }
.split { width: 16px; height: 9px; background: #e1e1e1; border: 1px solid #555; }
.up { margin-top: 7px; }
.thumb { margin-top: 6px; width: 15px; height: 241px; border: 1px solid #888; border-radius: 2px; background: linear-gradient(90deg, #f5f5f5, #d5d5d8); display: flex; align-items: center; justify-content: center; }
.thumb i { width: 7px; height: 8px; background: repeating-linear-gradient(#666 0 1px, transparent 1px 3px); }
.dn { margin-top: 254px; }

.status { height: 29px; flex: none; display: flex; align-items: center; background: #f0f0f0; padding-left: 552px; color: #333; }
.pv { margin-left: 14px; }
.pagebox { width: 115px; height: 20px; margin-left: 12px; border: 1px solid #a6a6a6; background: #fff; color: #000; display: flex; align-items: center; justify-content: space-between; padding: 0 4px; letter-spacing: .1px; }
.nx { margin-left: 9px; }
.last { margin-left: 16px; }
.v1 { margin-left: 12px; }
.v2 { margin-left: 9px; }
.mode { width: 23px; height: 18px; margin-left: 212px; background: #c2d3f2; display: flex; align-items: center; justify-content: center; }
.m2 { margin-left: 7px; }
.m3 { margin-left: 13px; }
.m4 { margin-left: 11px; }
.pct { width: 56px; margin-left: 27px; letter-spacing: 0; }
.slider { margin-left: 2px; margin-top: -2px; }

.taskbar { height: 30px; flex: none; display: flex; align-items: center; border-top: 1px solid #111; background: linear-gradient(#fff5 0 1px, transparent 2px), linear-gradient(90deg, #20202b 0, #29242e 220px, #3c3948 430px, #9fa0c5 550px, #777aa4 620px, #403a4c 680px, #595269 750px, #4e4a66 850px, #777398 960px, #51506e 1060px, #25232e 1140px, #35394c 1366px); }
.orb { margin: -6px 0 0 8px; align-self: flex-start; z-index: 1; }
.apps { display: flex; gap: 3px; margin-left: 14px; height: 29px; }
.app { width: 43px; height: 29px; border: 1px solid #9998a2; border-radius: 3px; box-shadow: inset 0 0 0 1px #302e38; background: linear-gradient(150deg, #777480, #55515c 45%, #36323b 50%, #4d4954); display: flex; align-items: center; justify-content: center; }
.stack { width: 43px; border-right: 4px double #888490; }
.light { background: linear-gradient(145deg, #b2b0c8, #77758f 50%, #9996b0); box-shadow: none; }
.active { background: linear-gradient(145deg, #f1f0f8, #c6c4da); border-color: #fff; box-shadow: none; }
.tray { display: flex; gap: 6px; margin-left: 540px; }
.clock { width: 55px; margin-left: 31px; color: #fff; font: 12px/16px "Open Sans", sans-serif; letter-spacing: -.3px; }
.desk { width: 14px; height: 28px; border: 1px solid #8b8c99; background: linear-gradient(135deg, #777985, #303340); }
```
